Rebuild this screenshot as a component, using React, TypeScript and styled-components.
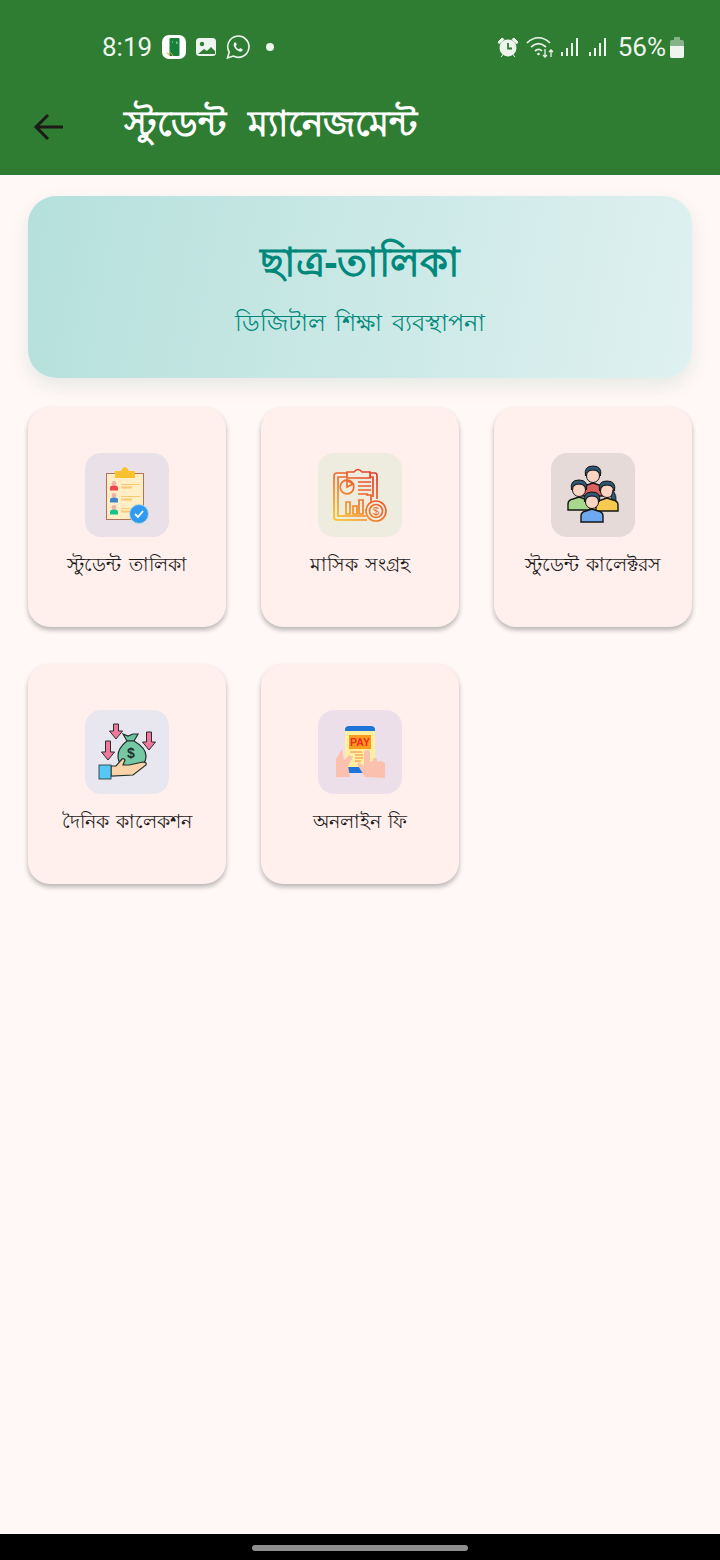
import React from "react";
import styled, { createGlobalStyle } from "styled-components";

const Global = createGlobalStyle`
  html, body { margin: 0; padding: 0; background: #fff8f6; }
  body { font-family: "Noto Sans", "Liberation Sans", sans-serif; }
`;

const Page = styled.div`
  width: 720px;
  height: 1560px;
  display: flex;
  flex-direction: column;
  background: #fff8f6;
  overflow: hidden;
`;

const Header = styled.header`
  height: 175px;
  flex: none;
  background: #2e7d32;
  display: flex;
  flex-direction: column;
`;

const StatusBar = styled.div`
  height: 94px;
  padding: 33px 36px 0 102px;
  box-sizing: border-box;
  display: flex;
  align-items: flex-start;
  justify-content: space-between;
  color: #eef5ee;
  font-family: Roboto, sans-serif;
  font-size: 26px;
  line-height: 28px;
`;

const StatusGroup = styled.div`
  display: flex;
  align-items: center;
  height: 28px;
`;

const Slot = styled.span<{ $ml: number }>`
  display: flex;
  margin-left: ${(p) => p.$ml}px;
`;

const AppBar = styled.div`
  display: flex;
  align-items: center;
  padding-left: 32px;
  height: 62px;
  gap: 58px;
`;

const BackButton = styled.div`
  display: flex;
  color: #1c1b1a;
  margin-top: 4px;
`;

const Title = styled.h1`
  margin: 0 0 4px;
  color: #fff;
  font-size: 36px;
  font-weight: 700;
  line-height: 50px;
  word-spacing: 13px;
`;

const Main = styled.main`
  flex: 1;
  padding: 21px 28px 0;
  display: flex;
  flex-direction: column;
  gap: 29px;
`;

const Banner = styled.section`
  height: 182px;
  flex: none;
  border-radius: 28px;
  background: linear-gradient(100deg, #b5e0dc 0%, #dff1f0 100%);
  box-shadow: 0 8px 20px rgba(0, 100, 90, 0.1);
  display: flex;
  flex-direction: column;
  align-items: center;
  color: #00897b;
`;

const BannerTitle = styled.h2`
  margin: 34px 0 0;
  font-size: 40px;
  line-height: 62px;
  font-weight: 700;
`;

const BannerSub = styled.p`
  margin: 12px 0 0;
  font-size: 24px;
  line-height: 36px;
  word-spacing: 3px;
`;

const Grid = styled.div`
  display: grid;
  grid-template-columns: repeat(3, 198px);
  grid-auto-rows: 220px;
  column-gap: 35px;
  row-gap: 37px;
`;

const Card = styled.div`
  background: #fff0ed;
  border-radius: 22px;
  box-shadow: 0 3px 5px rgba(0, 0, 0, 0.28);
  display: flex;
  flex-direction: column;
  align-items: center;
  padding-top: 46px;
  box-sizing: border-box;
`;

const Tile = styled.div<{ $bg: string }>`
  width: 84px;
  height: 84px;
  border-radius: 16px;
  background: ${(p) => p.$bg};
  display: flex;
`;

const Label = styled.span`
  margin-top: 12px;
  font-size: 19px;
  line-height: 30px;
  color: #1d1b1a;
  white-space: nowrap;
  word-spacing: 3px;
`;

const NavBar = styled.div`
  height: 26px;
  flex: none;
  background: #000;
  display: flex;
  justify-content: center;
  padding-top: 11px;
  box-sizing: border-box;
`;

const NavPill = styled.div`
  width: 216px;
  height: 6px;
  border-radius: 3px;
  background: #8e8e8e;
`;

const ChecklistArt = () => (
  <svg width="84" height="84" viewBox="0 0 84 84">
    <rect x="21.5" y="20.5" width="37" height="46" fill="#ffeec6" stroke="#b5705e" />
    <path d="M30 18h6l2-3q2-2 4 0l2 3h6v7H30z" fill="#fdc02f" />
    {[0, 12, 24].map((dy, i) => (
      <g key={dy}>
        <circle cx="29" cy={30.5 + dy} r="2.4" fill="#f1b2a8" />
        <path d={`M25 ${37.5 + dy}v-3q0-2 4-2t4 2v3z`} fill={["#f2434f", "#3d85c9", "#16c28a"][i]} />
        <rect x="36" y={31 + dy} width="19" height="1" fill="#fbc870" />
        <rect x="36" y={33.5 + dy} width="11" height="2" fill="#fbc870" />
      </g>
    ))}
    <circle cx="54" cy="61" r="9.5" fill="#2f9bf0" stroke="#bfd8d8" />
    <path d="M50 61l3 3 5-6" fill="none" stroke="#fff" strokeWidth="1.8" />
  </svg>
);

const ReportArt = () => (
  <svg width="84" height="84" viewBox="0 0 84 84">
    <defs>
      <linearGradient id="rep" gradientUnits="userSpaceOnUse" x1="62" y1="18" x2="18" y2="68">
        <stop offset="0" stopColor="#e22f2c" />
        <stop offset="0.55" stopColor="#f0772a" />
        <stop offset="1" stopColor="#fdc014" />
      </linearGradient>
    </defs>
    <g fill="none" stroke="url(#rep)" strokeWidth="1.7">
      <path d="M29 20h-10q-3 0-3 3v41q0 3 3 3h30M52 20h5q2 0 2 3v23" />
      <path d="M29 24h-9v39h28M52 24h3v20" />
      <path d="M29 25v-6h7q4-5 8 0h8v6z" />
      <circle cx="29" cy="34" r="6.8" />
      <path d="M29 34v-7l6 4z" />
      <path d="M40 29h13M40 33h13M40 37h13M40 41h10" />
      <path d="M28 49h4v12h-4zM35 53h4v8h-4zM41 47h4v14h-4zM48 42h5v8" />
      <circle cx="58" cy="58" r="10" fill="#eeecdf" />
      <circle cx="58" cy="58" r="6.5" />
    </g>
    <text x="58" y="62" fontSize="11" textAnchor="middle" fill="#ea6a2c" fontFamily="Liberation Sans">$</text>
  </svg>
);

const Person = ({ x, y, shirt, hair }: { x: number; y: number; shirt: string; hair?: boolean }) => (
  <g transform={`translate(${x} ${y})`} stroke="#141414" strokeWidth="1.4">
    <path d="M-11 23v-6q0-4 5-5l6-2 6 2q5 1 5 5v6z" fill={shirt} />
    <circle cx="0" cy="3" r="6.5" fill="#fbd5c4" strokeWidth="1" />
    <path d="M-7.5 3q-2-10 7.5-10t7.5 10q-1-6-7.5-6t-7.5 6z" fill="#2f5874" strokeWidth="1" />
    {hair && <path d="M6 2q4 6 3 11l-5-3z" fill="#2f5874" strokeWidth="0.8" />}
  </g>
);

const TeamArt = () => (
  <svg width="84" height="84" viewBox="0 0 84 84">
    <Person x={42} y={20} shirt="#d9615f" />
    <Person x={56} y={35} shirt="#f6c94f" hair />
    <Person x={28} y={34} shirt="#a6d98c" />
    <Person x={41} y={46} shirt="#6ea8ef" />
  </svg>
);

const Arrow = ({ x, y, len }: { x: number; y: number; len: number }) => (
  <path
    d={`M${x - 2.5} ${y}h5v${len - 8}h4l-6.5 8-6.5-8h4z`}
    fill="#f0789c"
    stroke="#2a2a2a"
    strokeWidth="1"
  />
);

const MoneyArt = () => (
  <svg width="84" height="84" viewBox="0 0 84 84">
    <Arrow x={31} y={14} len={15} />
    <Arrow x={23} y={31} len={19} />
    <Arrow x={64} y={22} len={18} />
    <g stroke="#20302a" strokeWidth="1.2">
      <path d="M38 24l5 2 5-2 5 0-4 7h-7z" fill="#6cc3a0" />
      <path d="M42 31h7q12 7 12 15 0 9-9 10H42q-9-1-9-10 0-8 9-15z" fill="#74c8a3" />
      <path d="M26 56h5l6-7q2-1 3 1l-2 5h6l14-3q4 0 3 3L48 65l-22 1z" fill="#fcd3a8" />
    </g>
    <rect x="14" y="55" width="12" height="14" fill="#56c8f5" stroke="#20302a" strokeWidth="0.8" />
    <text x="46" y="48" fontSize="14" textAnchor="middle" fill="#1d2d28" fontFamily="Liberation Sans" fontWeight="700">$</text>
  </svg>
);

const PayArt = () => (
  <svg width="84" height="84" viewBox="0 0 84 84">
    <path d="M27 63V20q0-4 4-4h22q4 0 4 4v43z" fill="#1e74d8" />
    <rect x="27" y="21" width="30" height="36" fill="#fff0a0" />
    <rect x="31" y="25" width="22" height="14" fill="#fb9a1e" />
    <text x="42" y="36" fontSize="10.5" fontWeight="700" textAnchor="middle" fill="#ef2b22" fontFamily="Liberation Sans">PAY</text>
    <path d="M32 42h12M37 45h8M37 48h8M37 51h6" stroke="#f5824a" strokeWidth="1" />
    <path d="M18 67V49l6-10 2 11 5-5 4 2-5 9 2 11z" fill="#fcc1ae" />
    <path d="M47 67L39 54l2-2 5 4V42q0-2 3-2t3 2v10l3-1v-2q2-2 4 0v3l3-1q2 0 3 1l2 1v15z" fill="#fcc1ae" />
  </svg>
);

const items = [
  { label: "স্টুডেন্ট তালিকা", bg: "#eae1e8", art: <ChecklistArt /> },
  { label: "মাসিক সংগ্রহ", bg: "#eeecdf", art: <ReportArt /> },
  { label: "স্টুডেন্ট কালেক্টরস", bg: "#e6dad9", art: <TeamArt /> },
  { label: "দৈনিক কালেকশন", bg: "#e8e6ee", art: <MoneyArt /> },
  { label: "অনলাইন ফি", bg: "#ecdfe9", art: <PayArt /> },
];

const SignalIcon = () => (
  <svg width="20" height="22" viewBox="0 0 20 22" fill="#eef5ee">
    <rect x="1" y="16" width="2" height="4" />
    <rect x="6" y="12" width="2" height="8" />
    <rect x="11" y="7" width="2" height="13" />
    <rect x="16" y="2" width="2" height="18" />
  </svg>
);

export default function App() {
  return (
    <Page>
      <Global />
      <Header>
        <StatusBar>
          <StatusGroup>
            <span>8:19</span>
            <Slot $ml={10}>
              <svg width="24" height="24" viewBox="0 0 24 24">
                <rect width="24" height="24" rx="7" fill="#fff" />
                <rect x="7.5" y="3" width="10" height="18" rx="1" fill="#16803c" />
                <path d="M7.5 21a3 3 0 0 0-3-3M7.5 17a6.5 6.5 0 0 1 3.5 4" stroke="#d3b33a" fill="none" />
                <path d="M10 7h1M14 7h1v2" stroke="#a7d8b5" fill="none" />
              </svg>
            </Slot>
            <Slot $ml={9}>
              <svg width="22" height="22" viewBox="0 0 22 22">
                <rect x="1" y="2" width="20" height="18" rx="3.5" fill="#eef5ee" />
                <circle cx="7" cy="8" r="2.2" fill="#2e7d32" />
                <path d="M3 18l6-5 3 2 4-4 4 4v3z" fill="#2e7d32" />
              </svg>
            </Slot>
            <Slot $ml={9}>
              <svg width="24" height="24" viewBox="0 0 24 24" fill="none">
                <path d="M1.5 23l1.7-6A10.6 10.6 0 1 1 7.3 21z" stroke="#eef5ee" strokeWidth="1.6" />
                <path d="M8.5 7.5c-1.5 1.5-1 4 1 6.3s4.7 3.5 6.3 2.5c1-.7 1-1.7.7-2l-2.3-1.2-1.2 1.2c-1.5-.5-2.7-1.8-3.3-3.3l1.2-1.2L9.7 7.5c-.3-.3-.8-.3-1.2 0z" fill="#eef5ee" />
              </svg>
            </Slot>
            <Slot $ml={5}>
              <svg width="22" height="10" viewBox="0 0 22 10">
                <circle cx="15" cy="5" r="4" fill="#eef5ee" />
              </svg>
            </Slot>
          </StatusGroup>
          <StatusGroup>
            <svg width="22" height="22" viewBox="0 0 22 22">
              <circle cx="11" cy="12" r="8.5" fill="#eef5ee" />
              <path d="M11 7v5.5h4" stroke="#2e7d32" strokeWidth="1.8" fill="none" />
              <path d="M1 6l4-4 2 1.5-4.5 4.5zM21 6l-4-4-2 1.5 4.5 4.5zM4 21l2.5-3M18 21l-2.5-3" fill="#eef5ee" stroke="#eef5ee" />
            </svg>
            <Slot $ml={7}>
              <svg width="30" height="24" viewBox="0 0 30 24" fill="none" stroke="#eef5ee" strokeWidth="1.7">
                <path d="M1 8c7-7 16-7 23 0M5 12c5-4.5 10-4.5 15 0M9 16c2.5-2 5-2 7 0" />
                <circle cx="12.5" cy="19" r="1.3" fill="#eef5ee" stroke="none" />
                <path d="M19 14v8m-2-2l2 2 2-2M25 22v-7m-2 2l2-2 2 2" strokeWidth="1.3" />
              </svg>
            </Slot>
            <Slot $ml={4}>
              <SignalIcon />
            </Slot>
            <Slot $ml={8}>
              <SignalIcon />
            </Slot>
            <Slot $ml={10}>56%</Slot>
            <Slot $ml={4}>
              <svg width="14" height="22" viewBox="0 0 14 22">
                <path d="M4 1h6v3h2q2 0 2 2v14q0 2-2 2H2q-2 0-2-2V6q0-2 2-2h2z" fill="#86b389" />
                <path d="M0 10h14v10q0 2-2 2H2q-2 0-2-2z" fill="#eef5ee" />
              </svg>
            </Slot>
          </StatusGroup>
        </StatusBar>
        <AppBar>
          <BackButton>
            <svg width="34" height="34" viewBox="0 0 34 34" fill="none" stroke="currentColor" strokeWidth="3">
              <path d="M31 17H4M16 5L4 17l12 12" />
            </svg>
          </BackButton>
          <Title>স্টুডেন্ট ম্যানেজমেন্ট</Title>
        </AppBar>
      </Header>
      <Main>
        <Banner>
          <BannerTitle>ছাত্র-তালিকা</BannerTitle>
          <BannerSub>ডিজিটাল শিক্ষা ব্যবস্থাপনা</BannerSub>
        </Banner>
        <Grid>
          {items.map((item) => (
            <Card key={item.label}>
              <Tile $bg={item.bg}>{item.art}</Tile>
              <Label>{item.label}</Label>
            </Card>
          ))}
        </Grid>
      </Main>
      <NavBar>
        <NavPill />
      </NavBar>
    </Page>
  );
}
